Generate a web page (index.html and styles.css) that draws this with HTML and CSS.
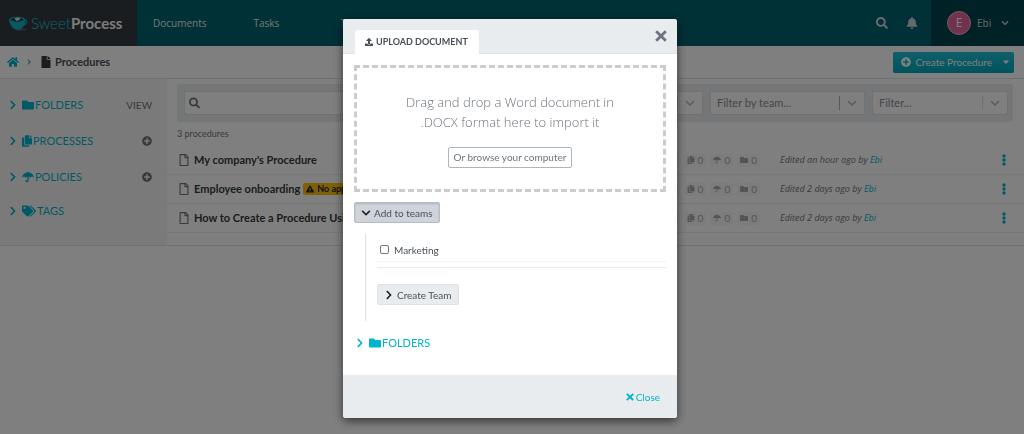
FILE: index.html
```html
<!DOCTYPE html>
<html lang="en">
<head>
<meta charset="utf-8">
<title>Procedures - SweetProcess</title>
<link rel="stylesheet" href="styles.css">
</head>
<body>
<svg class="sprite" aria-hidden="true">
  <symbol id="right" viewBox="0 0 320 512"><path d="M285.476 272.971L91.132 467.314c-9.373 9.373-24.569 9.373-33.941 0l-22.667-22.667c-9.357-9.357-9.375-24.522-.04-33.901L188.505 256 34.484 101.255c-9.335-9.379-9.317-24.544.04-33.901l22.667-22.667c9.373-9.373 24.569-9.373 33.941 0L285.475 239.03c9.373 9.372 9.373 24.568.001 33.941z"/></symbol>
  <symbol id="down" viewBox="0 0 448 512"><path d="M207.029 381.476L12.686 187.132c-9.373-9.373-9.373-24.569 0-33.941l22.667-22.667c9.357-9.357 24.522-9.375 33.901-.04L224 284.505l154.745-154.021c9.379-9.335 24.544-9.317 33.901.04l22.667 22.667c9.373 9.373 9.373 24.569 0 33.941L240.971 381.476c-9.373 9.372-24.569 9.372-33.942 0z"/></symbol>
  <symbol id="thin-down" viewBox="0 0 10 10"><path d="M1.5 3.5L5 7l3.500-3.500" fill="none" stroke="currentColor" stroke-width="1.500" stroke-linecap="round" stroke-linejoin="round"/></symbol>
  <symbol id="thin-right" viewBox="0 0 10 10"><path d="M3.500 2L6.500 5l-3 3" fill="none" stroke="currentColor" stroke-width="1.500"/></symbol>
  <symbol id="caret" viewBox="0 0 10 10"><path d="M1 3h8L5 7.500z"/></symbol>
  <symbol id="times" viewBox="0 0 12 12"><path d="M2.200 2.200l7.600 7.600M9.800 2.200l-7.600 7.600" fill="none" stroke="currentColor" stroke-width="2.800" stroke-linecap="square"/></symbol>
  <symbol id="folder" viewBox="0 0 512 512"><path d="M464 128H272l-64-64H48C21.490 64 0 85.490 0 112v288c0 26.510 21.490 48 48 48h416c26.510 0 48-21.490 48-48V176c0-26.510-21.490-48-48-48z"/></symbol>
  <symbol id="plus" viewBox="0 0 512 512"><path d="M256 8C119 8 8 119 8 256s111 248 248 248 248-111 248-248S393 8 256 8zm144 276c0 6.600-5.400 12-12 12h-92v92c0 6.600-5.400 12-12 12h-56c-6.600 0-12-5.400-12-12v-92h-92c-6.600 0-12-5.400-12-12v-56c0-6.600 5.400-12 12-12h92v-92c0-6.600 5.400-12 12-12h56c6.600 0 12 5.400 12 12v92h92c6.600 0 12 5.400 12 12v56z"/></symbol>
  <symbol id="search" viewBox="0 0 512 512"><path d="M505 442.700L405.300 343c-4.500-4.500-10.600-7-17-7H372c27.600-35.300 44-79.700 44-128C416 93.100 322.900 0 208 0S0 93.100 0 208s93.100 208 208 208c48.300 0 92.700-16.400 128-44v16.300c0 6.400 2.500 12.500 7 17l99.700 99.700c9.400 9.400 24.600 9.400 33.900 0l28.300-28.300c9.400-9.400 9.400-24.600.1-34zM208 336c-70.700 0-128-57.200-128-128 0-70.700 57.200-128 128-128 70.700 0 128 57.200 128 128 0 70.700-57.200 128-128 128z"/></symbol>
  <symbol id="bell" viewBox="0 0 448 512"><path d="M224 512c35.320 0 63.970-28.650 63.970-64H160.030c0 35.350 28.650 64 63.970 64zm215.390-149.710c-19.320-20.760-55.470-51.990-55.470-154.290 0-77.700-54.480-139.900-127.940-155.160V32c0-17.670-14.320-32-31.980-32s-31.980 14.330-31.980 32v20.840C118.560 68.100 64.080 130.300 64.080 208c0 102.300-36.150 133.530-55.470 154.290-6 6.450-8.660 14.160-8.610 21.710.11 16.400 12.980 32 32.100 32h383.800c19.120 0 32-15.600 32.100-32 .05-7.550-2.610-15.270-8.610-21.710z"/></symbol>
  <symbol id="file" viewBox="0 0 384 512"><path d="M224 136V0H24C10.700 0 0 10.700 0 24v464c0 13.300 10.700 24 24 24h336c13.300 0 24-10.700 24-24V160H248c-13.200 0-24-10.800-24-24zm160-14.100v6.100H256V0h6.100c6.400 0 12.500 2.500 17 7l97.900 98c4.500 4.500 7 10.600 7 16.900z"/></symbol>
  <symbol id="file-o" viewBox="0 0 384 512"><path d="M369.900 97.900L286 14C277 5 264.800-.1 252.100-.1H48C21.500 0 0 21.500 0 48v416c0 26.500 21.500 48 48 48h288c26.500 0 48-21.500 48-48V131.900c0-12.700-5.100-25-14.100-34zM332.100 128H256V51.900l76.100 76.100zM48 464V48h160v104c0 13.300 10.700 24 24 24h104v288H48z"/></symbol>
  <symbol id="copy" viewBox="0 0 448 512"><path d="M320 448v40c0 13.255-10.745 24-24 24H24c-13.255 0-24-10.745-24-24V120c0-13.255 10.745-24 24-24h72v296c0 30.879 25.121 56 56 56h168zm0-344V0H152c-13.255 0-24 10.745-24 24v368c0 13.255 10.745 24 24 24h272c13.255 0 24-10.745 24-24V128H344c-13.200 0-24-10.800-24-24zm120.971-31.029L375.029 7.029A24 24 0 0 0 358.059 0H352v96h96v-6.059a24 24 0 0 0-7.029-16.970z"/></symbol>
  <symbol id="umbrella" viewBox="0 0 576 512"><path d="M256 34V20c0-26 64-26 64 0v14c140 12 232 108 255 228 3 14-14 18-22 9-54-58-110-50-155 20-6 8-17 8-22 0-24-36-54-60-88-60s-64 24-88 60c-5 8-16 8-22 0-45-70-101-78-155-20-8 9-25 5-22-9C24 142 116 46 256 34z"/><path d="M288 240v190c0 66-96 66-96 0" fill="none" stroke="currentColor" stroke-width="64" stroke-linecap="round"/></symbol>
  <symbol id="tags" viewBox="0 0 640 512"><path d="M497.941 225.941L286.059 14.059A48 48 0 0 0 252.118 0H48C21.490 0 0 21.490 0 48v204.118a48 48 0 0 0 14.059 33.941l211.882 211.882c18.744 18.745 49.136 18.746 67.882 0l204.118-204.118c18.745-18.745 18.745-49.137 0-67.882zM112 160c-26.510 0-48-21.490-48-48s21.490-48 48-48 48 21.490 48 48-21.490 48-48 48zm513.941 133.823L421.823 497.941c-18.745 18.745-49.137 18.745-67.882 0l-.36-.36L527.640 323.522c16.999-16.999 26.360-39.600 26.360-63.640s-9.362-46.641-26.360-63.640L331.397 0h48.721a48 48 0 0 1 33.941 14.059l211.882 211.882c18.745 18.745 18.745 49.137 0 67.882z"/></symbol>
  <symbol id="home" viewBox="0 0 576 512"><path d="M280.370 148.260L96 300.110V464a16 16 0 0 0 16 16l112.060-.29a16 16 0 0 0 15.920-16V368a16 16 0 0 1 16-16h64a16 16 0 0 1 16 16v95.640a16 16 0 0 0 16 16.050L464 480a16 16 0 0 0 16-16V300L295.670 148.260a12.190 12.190 0 0 0-15.300 0zM571.600 251.470L488 182.560V44.050a12 12 0 0 0-12-12h-56a12 12 0 0 0-12 12v72.610L318.470 43a48 48 0 0 0-61 0L4.340 251.470a12 12 0 0 0-1.600 16.900l25.500 31A12 12 0 0 0 45.150 301l235.220-193.740a12.190 12.190 0 0 1 15.300 0L530.900 301a12 12 0 0 0 16.900-1.600l25.500-31a12 12 0 0 0-1.700-16.930z"/></symbol>
  <symbol id="upload" viewBox="0 0 512 512"><path d="M296 384h-80c-13.300 0-24-10.700-24-24V192h-87.700c-17.800 0-26.700-21.500-14.100-34.100L242.300 5.700c7.500-7.500 19.800-7.500 27.300 0l152.200 152.200c12.600 12.600 3.700 34.100-14.100 34.100H320v168c0 13.300-10.700 24-24 24zm216-8v112c0 13.300-10.700 24-24 24H24c-13.300 0-24-10.700-24-24V376c0-13.300 10.700-24 24-24h136v8c0 30.900 25.100 56 56 56h80c30.900 0 56-25.100 56-56v-8h136c13.300 0 24 10.700 24 24z"/></symbol>
  <symbol id="warn" viewBox="0 0 576 512"><path d="M569.517 440.013C587.975 472.007 564.806 512 527.940 512H48.054c-36.937 0-59.999-40.055-41.577-71.987L246.423 23.985c18.467-32.009 64.720-31.951 83.154 0l239.940 416.028zM288 354c-25.405 0-46 20.595-46 46s20.595 46 46 46 46-20.595 46-46-20.595-46-46-46zm-43.673-165.346l7.418 136c.347 6.364 5.609 11.346 11.982 11.346h48.546c6.373 0 11.635-4.982 11.982-11.346l7.418-136c.375-6.874-5.098-12.654-11.982-12.654h-63.383c-6.884 0-12.356 5.780-11.981 12.654z"/></symbol>
  <symbol id="dots" viewBox="0 0 4 12"><circle cx="2" cy="2" r="1.700"/><circle cx="2" cy="6" r="1.700"/><circle cx="2" cy="10" r="1.700"/></symbol>
</svg>

<header class="topbar">
  <a class="logo" href="#">
    <svg class="cup" viewBox="0 0 20 15"><path d="M6 14.500c4-2 10-2 13-.8-3 1.200-9 1.300-13 .8z" fill="#5b6267"/><path d="M0 3.500C1 9 3.500 13.500 9 13.800c3 0 5.500-1.600 6.800-4.300 2.300-.6 3.700-2.400 3.400-4.500-.2-1.400-1.200-2-2.300-1.700L0 3.500zm16.500 4.300.8-3c.9-.1 1 .5.800 1.200-.2.900-.8 1.500-1.600 1.800z" fill="#0fb3c9"/><ellipse cx="8.500" cy="3.500" rx="8.500" ry="3.200" fill="#0fb3c9"/><ellipse cx="8.500" cy="3.500" rx="6.800" ry="2.100" fill="#26424a"/><path d="M6 2.200l3-1.400 3 1.200-1 1.800-3 1-1.200-1.200z" fill="#d9dee0"/></svg>
    <span class="brand">Sweet<b>Process</b></span>
  </a>
  <nav class="nav">
    <a href="#">Documents</a>
    <a href="#">Tasks</a>
    <a href="#" class="last">Teams</a>
  </nav>
  <button class="bar-btn" aria-label="Search"><svg class="i12"><use href="#search"/></svg></button>
  <button class="bar-btn" aria-label="Notifications"><svg class="i12"><use href="#bell"/></svg></button>
  <button class="user"><span class="avatar">E</span><span>Ebi</span><svg class="i8"><use href="#down"/></svg></button>
</header>

<div class="crumbs">
  <a href="#" aria-label="Home" class="cyan"><svg class="i12"><use href="#home"/></svg></a>
  <svg class="i8 sep"><use href="#thin-right"/></svg>
  <svg class="i12 dark"><use href="#file"/></svg>
  <h1>Procedures</h1>
  <div class="create">
    <button><svg class="i10"><use href="#plus"/></svg>Create Procedure</button>
    <button class="more" aria-label="More options"><svg class="i8"><use href="#caret"/></svg></button>
  </div>
</div>

<div class="layout">
  <aside class="side">
    <div class="side-row"><a href="#"><svg class="i10"><use href="#right"/></svg><svg class="i12"><use href="#folder"/></svg>FOLDERS</a><a class="view" href="#">VIEW</a></div>
    <div class="side-row"><a href="#"><svg class="i10"><use href="#right"/></svg><svg class="i12 narrow"><use href="#copy"/></svg>PROCESSES</a><button aria-label="Add process"><svg class="i10"><use href="#plus"/></svg></button></div>
    <div class="side-row"><a href="#"><svg class="i10"><use href="#right"/></svg><svg class="i12"><use href="#umbrella"/></svg>POLICIES</a><button aria-label="Add policy"><svg class="i10"><use href="#plus"/></svg></button></div>
    <div class="side-row short"><a href="#"><svg class="i10"><use href="#right"/></svg><svg class="i12 wide"><use href="#tags"/></svg>TAGS</a></div>
  </aside>
  <main class="main">
    <form class="filters">
      <label class="field grow"><svg class="i12"><use href="#search"/></svg><input type="search" aria-label="Search procedures"></label>
      <label class="field mid"><select aria-label="Sort"><option>Sort...</option></select><span class="bar"></span><svg class="i10"><use href="#thin-down"/></svg></label>
      <label class="field mid"><select aria-label="Team"><option>Filter by team...</option></select><span class="bar strong"></span><svg class="i10"><use href="#thin-down"/></svg></label>
      <label class="field small"><select aria-label="Filter"><option>Filter...</option></select><span class="bar"></span><svg class="i10"><use href="#thin-down"/></svg></label>
    </form>
    <p class="count">3 procedures</p>
    <ul class="rows">
      <li>
        <svg class="i12"><use href="#file-o"/></svg><a class="title" href="#">My company's Procedure</a>
        <span class="chips"><span><svg class="i8"><use href="#file"/></svg>0</span><span><svg class="i8"><use href="#copy"/></svg>0</span><span><svg class="i8"><use href="#umbrella"/></svg>0</span><span><svg class="i8"><use href="#folder"/></svg>0</span></span>
        <span class="edited">Edited an hour ago by <a href="#">Ebi</a></span><button aria-label="Actions"><svg class="dots"><use href="#dots"/></svg></button>
      </li>
      <li>
        <svg class="i12"><use href="#file-o"/></svg><a class="title" href="#">Employee onboarding</a><span class="badge"><svg class="i8"><use href="#warn"/></svg>No approvers</span>
        <span class="chips"><span><svg class="i8"><use href="#file"/></svg>0</span><span><svg class="i8"><use href="#copy"/></svg>0</span><span><svg class="i8"><use href="#umbrella"/></svg>0</span><span><svg class="i8"><use href="#folder"/></svg>0</span></span>
        <span class="edited">Edited 2 days ago by <a href="#">Ebi</a></span><button aria-label="Actions"><svg class="dots"><use href="#dots"/></svg></button>
      </li>
      <li>
        <svg class="i12"><use href="#file-o"/></svg><a class="title" href="#">How to Create a Procedure Using</a>
        <span class="chips"><span><svg class="i8"><use href="#file"/></svg>0</span><span><svg class="i8"><use href="#copy"/></svg>0</span><span><svg class="i8"><use href="#umbrella"/></svg>0</span><span><svg class="i8"><use href="#folder"/></svg>0</span></span>
        <span class="edited">Edited 2 days ago by <a href="#">Ebi</a></span><button aria-label="Actions"><svg class="dots"><use href="#dots"/></svg></button>
      </li>
    </ul>
  </main>
</div>

<div class="backdrop">
  <section class="modal" role="dialog" aria-modal="true" aria-labelledby="upload-title">
    <header class="modal-head">
      <h2 class="tab" id="upload-title"><svg class="i8"><use href="#upload"/></svg>UPLOAD DOCUMENT</h2>
      <button class="x" aria-label="Close dialog"><svg class="i12"><use href="#times"/></svg></button>
    </header>
    <div class="modal-body">
      <div class="drop">
        <p>Drag and drop a Word document in<br>.DOCX format here to import it</p>
        <button class="browse">Or browse your computer</button>
      </div>
      <button class="btn pressed"><svg class="i10"><use href="#down"/></svg>Add to teams</button>
      <div class="teams">
        <div class="team-list">
          <label class="team"><input type="checkbox">Marketing</label>
        </div>
        <button class="btn"><svg class="i10"><use href="#right"/></svg>Create Team</button>
      </div>
      <a class="folders" href="#"><svg class="i10"><use href="#right"/></svg><svg class="i12"><use href="#folder"/></svg>FOLDERS</a>
    </div>
    <footer class="modal-foot"><button><svg class="i8"><use href="#times"/></svg>Close</button></footer>
  </section>
</div>
</body>
</html>
```
FILE: styles.css
```css
* { box-sizing: border-box; }
body {
  margin: 0;
  font: 10px/14px Lato, "Open Sans", sans-serif;
  color: #495057;
  background: #fff;
}
h1, h2, p, ul { margin: 0; padding: 0; }
a { color: inherit; text-decoration: none; }
button, input, select { font: inherit; color: inherit; margin: 0; padding: 0; border: 0; background: none; }
button { display: inline-flex; align-items: center; }
svg { fill: currentColor; flex: none; }
.sprite { position: absolute; width: 0; height: 0; }
.i8 { width: 8px; height: 8px; }
.i10 { width: 10px; height: 10px; }
.i12 { width: 12px; height: 12px; }
.cyan { color: #00b5cc; }
.dark { color: #343a40; }

.topbar { display: flex; align-items: center; height: 46px; background: #00626e; color: #ced4da; font-family: "Open Sans", sans-serif; }
.logo { display: flex; align-items: center; gap: 3px; width: 137px; height: 46px; padding-left: 9px; background: #343a40; }
.cup { width: 19px; height: 15px; }
.brand { font: 300 15px/20px Lato, sans-serif; color: #1cc6dc; }
.brand b { font-weight: 700; color: #f8f9fa; }
.nav { display: flex; flex: 1; gap: 47px; padding-left: 16px; color: #e9ecef; }
.nav .last { padding-left: 14px; }
.bar-btn { justify-content: center; width: 30px; height: 46px; }
.user { gap: 6px; height: 46px; width: 93px; margin-left: 4px; padding-left: 16px; background: #00444d; }
.user .i8 { margin-left: 4px; }
.avatar { display: grid; place-items: center; width: 24px; height: 24px; border: 1px solid #e9b4c8; border-radius: 50%; background: #e0649a; color: #fff; font-size: 12px; }

.crumbs { display: flex; align-items: center; height: 33px; padding: 0 10px 0 7px; border-bottom: 1px solid #dee2e6; }
.crumbs > a { display: flex; }
.sep { margin: 0 12px 0 6px; color: #6c9aa0; }
.crumbs .dark { width: 10px; margin-left: -4px; }
.crumbs h1 { margin: 0 auto 0 4px; font-size: 11px; font-weight: 700; line-height: 16px; }
.create { display: flex; height: 21px; border-radius: 2px; overflow: hidden; background: linear-gradient(#1fc0d4, #00a5ba); color: #fff; }
.create button { gap: 4px; padding: 0 6px 0 8px; }
.create .more { padding: 0 4px; }

.layout { display: flex; align-items: stretch; border-bottom: 1px solid #dee2e6; }
.side { width: 167px; padding: 8px 15px 16px 8px; background: #f4f4f4; }
.side-row { display: flex; align-items: center; justify-content: space-between; height: 36px; font: 11px/16px Lato, sans-serif; color: #6c757d; }
.side-row.short { height: 32px; }
.side-row a:first-child { display: flex; align-items: center; color: #00b5cc; }
.side-row .i10 + svg { margin-left: 4px; margin-right: 1px; }
.side-row .view { color: #6c757d; font-size: 10px; }
.narrow { width: 10px; }
.wide { width: 14px; }

.main { flex: 1; min-width: 0; padding-top: 5px; }
.filters { display: flex; gap: 7px; margin: 0 11px 0 10px; padding: 7px 5px 7px 7px; border-radius: 3px; background: #e9ecef; }
.field { display: flex; align-items: center; height: 24px; min-width: 0; padding: 0 7px 0 6px; border: 1px solid #dee2e6; border-radius: 2px; background: #fff; color: #8a9299; }
.field .i12 { width: 11px; color: #6c757d; }
.field .i10 { margin-left: 7px; color: #adb5bd; }
.field input { flex: 1; min-width: 0; }
.field select { flex: 1; min-width: 0; appearance: none; font-size: 11px; color: #868e96; }
.field.grow { flex: 1; padding-left: 4px; }
.mid { width: 155px; }
.small { width: 136px; }
.bar { width: 1px; height: 14px; background: #dee2e6; }
.bar.strong { background: #adb5bd; }
.count { padding: 5px 10px; font-size: 9px; color: #6c757d; }
.rows { list-style: none; padding-bottom: 12px; }
.rows li { display: flex; align-items: center; height: 29px; padding-left: 11px; border-bottom: 1px solid #e9ecef; white-space: nowrap; }
.rows li > .i12 { margin-right: 4px; color: #6c757d; }
.title { color: #343a40; font-size: 11px; font-weight: 700; }
.badge { display: flex; align-items: center; gap: 3px; height: 12px; margin-left: 3px; padding: 0 3px; border-radius: 2px; background: #ffc107; color: #212529; font-size: 9px; font-weight: 700; }
.chips { display: flex; gap: 4px; margin-left: auto; color: #a4aab0; font-size: 10px; line-height: 13px; }
.chips span { display: flex; align-items: center; gap: 3px; padding: 0 3px; border-radius: 2px; background: #f8f9fa; }
.edited { width: 209px; margin-left: 20px; font: italic 9px/14px "Open Sans", sans-serif; color: #6c757d; }
.edited a { color: #00b5cc; }
.rows button { width: 35px; padding-left: 13px; color: #00b5cc; }
.dots { width: 4px; height: 12px; }

.backdrop { position: fixed; inset: 0; display: flex; align-items: flex-start; justify-content: center; padding: 19px 4px 0 0; background: rgba(0, 0, 0, .5); }
.modal { width: 334px; border-radius: 3px; overflow: hidden; background: #fff; box-shadow: 0 3px 10px rgba(0, 0, 0, .6); }
.modal-head { display: flex; align-items: flex-end; justify-content: space-between; height: 35px; padding: 0 10px 0 12px; border-bottom: 1px solid #dee2e6; background: #e9ecef; }
.tab { display: flex; align-items: center; gap: 3px; height: 24px; margin-bottom: -1px; padding: 0 11px 0 10px; border-radius: 3px 3px 0 0; background: #fff; font-size: 9px; font-weight: 700; line-height: 12px; }
.x { align-self: center; color: #6c757d; }
.modal-body { display: flex; flex-direction: column; align-items: flex-start; padding: 11px 11px 24px; }
.drop { align-self: stretch; display: flex; flex-direction: column; align-items: center; justify-content: center; gap: 15px; height: 127px; padding-top: 2px; border: 3px dashed #ccc; }
.drop p { font: 300 13px/20px "Open Sans", sans-serif; text-align: center; color: #6c757d; }
.browse { height: 21px; padding: 0 5px; border: 1px solid #adb5bd; border-radius: 2px; color: #6c757d; }
.btn { gap: 3px; height: 21px; padding: 0 6px; border: 1px solid #dee2e6; border-radius: 2px; background: #e9ecef; }
.pressed { margin-top: 10px; border-color: #b3bdc8; background: #ced4da; box-shadow: inset 0 1px 2px rgba(0, 0, 0, .15); }
.btn .i10 { color: #212529; }
.teams { align-self: stretch; margin: 11px 0 0 11px; padding: 4px 0 16px 11px; border-left: 1px solid #dee2e6; }
.team-list { margin-bottom: 16px; padding-bottom: 5px; border-bottom: 1px solid #e9ecef; }
.team { display: flex; align-items: center; gap: 5px; height: 24px; padding: 0 3px; border-bottom: 1px solid #f1f3f5; }
.team input { appearance: none; width: 9px; height: 9px; border: 1px solid #767676; border-radius: 2px; background: #fff; }
.folders { display: flex; align-items: center; margin-top: 14px; padding-left: 1px; font: 11px/16px Lato, sans-serif; color: #00b5cc; }
.folders .i12 { margin: 0 1px 0 4px; }
.modal-foot { display: flex; align-items: center; justify-content: flex-end; height: 43px; padding-right: 17px; background: #e9ecef; }
.modal-foot button { gap: 2px; color: #00b5cc; }
```
